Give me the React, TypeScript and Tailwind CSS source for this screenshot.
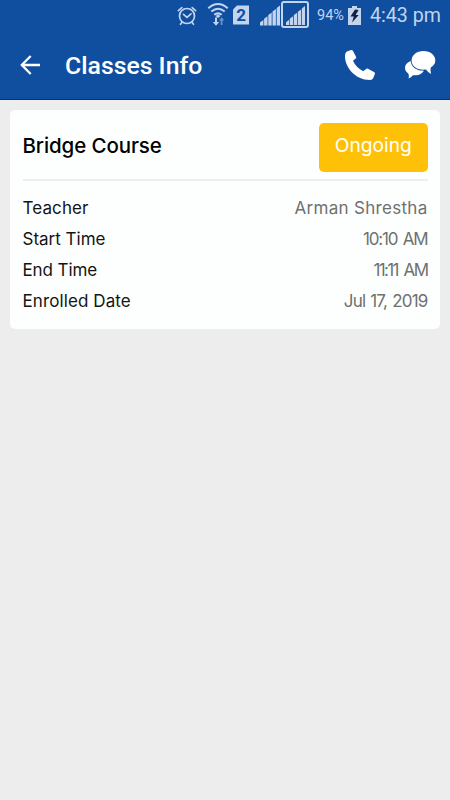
const rows = [
  { label: "Teacher", value: "Arman Shrestha", labelClass: "tracking-[0.1px]", valueClass: "tracking-[0.3px]" },
  { label: "Start Time", value: "10:10 AM", labelClass: "tracking-[0px]", valueClass: "tracking-[-1.2px] [word-spacing:2px]" },
  { label: "End Time", value: "11:11 AM", labelClass: "tracking-[-0.1px]", valueClass: "tracking-[-1.6px] [word-spacing:2.5px]" },
  { label: "Enrolled Date", value: "Jul 17, 2019", labelClass: "tracking-[0.1px]", valueClass: "tracking-[-0.8px] [word-spacing:1px]" },
];

function AlarmIcon() {
  return (
    <svg width="20" height="22" viewBox="0 0 20 22" fill="none" stroke="currentColor" strokeWidth="1.7" strokeLinecap="round">
      <circle cx="10" cy="11" r="7.5" />
      <path d="M1.4 5.6 4.8 2.6M18.6 5.6 15.2 2.6M4.8 17.5 3.5 19.3M15.2 17.5l1.3 1.8M6.5 9.3l3.5 3 4-3.5" />
    </svg>
  );
}

function WifiIcon() {
  return (
    <svg width="22" height="24" viewBox="0 0 22 24" fill="none" stroke="currentColor" strokeWidth="2">
      <path d="M1.3 6.2Q11-2.2 20.7 6.2M4.3 9.6q6.7-5.6 13.4 0M7.3 12.8q3.7-2.9 7.4 0" />
      <path d="m8.5 14 2.5-1.5 2.5 1.5-2.5 2Z" fill="currentColor" stroke="none" />
      <path d="M8 15.5v4.5H5.8L9 23.7l3.2-3.7H10v-4.5Z" fill="currentColor" stroke="none" />
      <path d="M13.7 23v-4.5h-1.8l2.7-3.2 2.7 3.2h-1.8V23Z" fill="#6d91c7" stroke="none" />
    </svg>
  );
}

function SignalIcon({ className }: { className: string }) {
  return (
    <svg className={className} viewBox="0 0 20 20" fill="currentColor">
      <path d="M0 20v-3l3.4-2.5V20ZM4.1 20v-6.8l3.4-2.5V20ZM8.3 20V9.6l3.4-2.5V20ZM12.5 20V6.1l3.4-2.5V20ZM16.7 20V2.6L20 0V20Z" />
    </svg>
  );
}

function BatteryIcon() {
  return (
    <svg className="mb-px ml-[3px]" width="13" height="19" viewBox="0 0 13 19">
      <path d="M4 0h5v2h4v17H0V2h4Z" fill="currentColor" />
      <path d="M7 3.5 2.5 10.5h3.3L4 16.5 10.7 9H7.6l3-5Z" fill="#10213f" />
    </svg>
  );
}

function PhoneIcon() {
  return (
    <svg className="ml-auto" width="30" height="30" viewBox="0 0 30 30" fill="currentColor">
      <path d="M2 1.6 6 .1Q7.3-.2 8 1l3 5.8q.5 1-.3 1.8L8 10.8Q10.8 17.3 18.2 21.3L21 19q.9-.8 2-.3l6 3.3q1.2.6.9 1.8l-1.5 4Q27.5 30 25 30C10 30 0 17 0 6.5Q0 2.5 2 1.6Z" />
    </svg>
  );
}

function ChatIcon() {
  return (
    <svg className="ml-[30px]" width="31" height="30" viewBox="0 0 31 30" fill="currentColor">
      <path d="M9 10.5C3.5 10.8 0 14.2 0 18q0 3.4 3.3 5.4.9 1.6.3 5.1 3-1.4 4.3-3.3c6 .6 10.5-2.1 11.2-5.5Z" />
      <path
        d="M18.5 1C25.4 1 30.3 5.2 30.3 10.4q0 4.2-4.5 7-.8 2.4.2 6.6-3.4-1.8-5-4.4C12.3 20.6 6.6 16.4 6.6 10.5 6.6 5.2 11.6 1 18.5 1Z"
        stroke="#104fa0"
        strokeWidth="1.8"
        paintOrder="stroke"
      />
    </svg>
  );
}

export default function App() {
  return (
    <div className="h-[800px] w-[450px] overflow-hidden bg-[#ededed] font-['Inter',sans-serif]">
      <header className="h-[100px] border-b border-[#003399] bg-[#104fa0] pt-px font-['Roboto',sans-serif] text-white">
        {/* Status bar */}
        <div className="flex h-[29px] items-center pl-[177px] text-[#c2d4ee]">
          <AlarmIcon />
          <span className="ml-[10px] pb-[4px]">
            <WifiIcon />
          </span>
          <svg className="mb-[2px] ml-[4px]" width="16" height="20" viewBox="0 0 16 20">
            <path d="M4 .5h12v19H0v-15Z" fill="currentColor" />
            <text x="8.2" y="16" textAnchor="middle" fontSize="17" fontWeight="700" fill="#104fa0">2</text>
          </svg>
          <SignalIcon className="mb-px ml-[11px] h-[21px] w-[20px]" />
          <span className="mb-[2px] ml-px flex h-[27px] w-[28px] items-end justify-center rounded-[3px] border-2 border-current pb-px">
            <SignalIcon className="h-[19px] w-[19px]" />
          </span>
          <span className="ml-[8px] w-[28px] pt-px text-[14.5px]">94%</span>
          <BatteryIcon />
          <span className="ml-[9px] pt-px text-[19.6px] whitespace-nowrap">4:43 pm</span>
        </div>

        {/* Title bar */}
        <div className="flex h-[70px] items-center pr-[14px] pl-[20px]">
          <svg width="21" height="20" viewBox="0 0 21 20" fill="none" stroke="currentColor" strokeWidth="2.3">
            <path d="M20 10H2M10.7 1 1.8 10l8.9 9" />
          </svg>
          <h1 className="ml-[24px] pt-px text-[24.8px] font-medium">Classes Info</h1>
          <PhoneIcon />
          <ChatIcon />
        </div>
      </header>

      <main className="p-[10px]">
        <section className="h-[219px] rounded-[5px] bg-[#fcfffe] px-[12.5px] pt-[13px]">
          <div className="flex h-[58px] items-start justify-between border-b-2 border-[#eeeeef]">
            <h2 className="mt-[8px] text-[20.5px] leading-[30px] font-medium tracking-[-0.1px] text-black">Bridge Course</h2>
            <span className="flex h-[49px] w-[108.5px] items-center justify-center rounded-[5px] bg-[#ffc107] pb-[4px] text-[19.2px] text-white">
              Ongoing
            </span>
          </div>
          <dl className="mt-[12px]">
            {rows.map((row) => (
              <div key={row.label} className="flex h-[31px] items-center justify-between pt-px text-[17px]">
                <dt className={`text-[#141414] ${row.labelClass}`}>{row.label}</dt>
                <dd className={`text-[#707070] ${row.valueClass}`}>{row.value}</dd>
              </div>
            ))}
          </dl>
        </section>
      </main>
    </div>
  );
}
